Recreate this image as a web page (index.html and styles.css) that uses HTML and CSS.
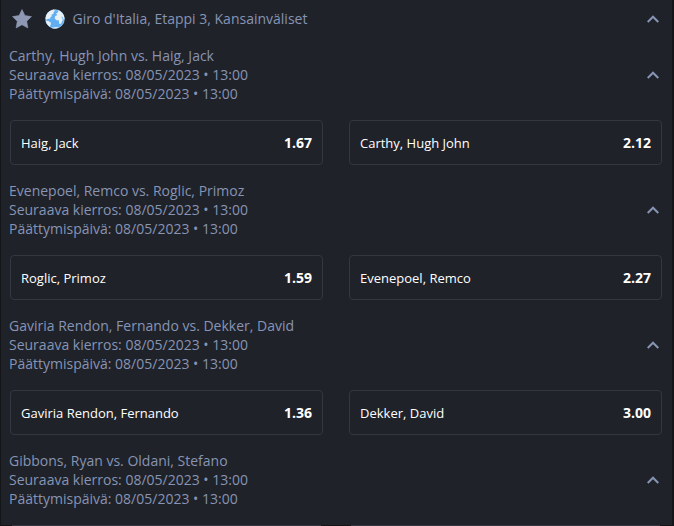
FILE: index.html
```html
<!DOCTYPE html>
<html lang="fi">
<head>
<meta charset="utf-8">
<title>Giro d'Italia</title>
<link rel="stylesheet" href="styles.css">
</head>
<body>
<svg class="defs" aria-hidden="true"><symbol id="up" viewBox="0 0 12 8"><path d="M.7 7 6 1.700 11.300 7"/></symbol></svg>
<main class="panel">
  <header class="head">
    <svg class="star" viewBox="0 0 20 20"><path d="M10 .5 12.900 6.600 19.500 7.600 14.700 12.200 15.900 19 10 15.700 4.100 19 5.300 12.200 .5 7.600 7.100 6.600Z"/></svg>
    <svg class="globe" viewBox="0 0 20 20"><circle cx="10" cy="10" r="9.5" fill="#62aef2"/><path fill="#e8f1f6" d="M6.500 1.200 8.800.6 9.800 2 8.600 3.300 8.400 5 6.600 5.500 6.700 7.300 5.200 8.500 5.300 9.800 3.500 9.700 1.200 10.500 .5 9C1 4.800 3.500 2.300 6.500 1.200ZM.6 11.800 3.300 12 6 13.700 5.700 15.700 4.600 17.800C2.500 16 1 14 .6 11.800ZM11 4.500 13 3.200 13.300 1.200C16.800 2.500 19.300 5.700 19.500 9.500L18.500 10.500 17.400 7.700 16.300 7.700 17.800 10.500 17.100 12.400 16 14.700 14.300 14.900 13.700 11.300 11.300 11.200 9.700 9.300 10.100 7.200 12.300 5.900ZM6.500 18.900 11 18 14 18.600C12 19.700 9 19.900 6.500 18.900Z"/><circle cx="10" cy="10" r="9.300" fill="none" stroke="#d5e9f8" stroke-width=".5"/></svg>
    <span class="title">Giro d'Italia, Etappi 3, Kansainväliset</span>
    <svg class="chevron"><use href="#up"/></svg>
  </header>
  <section class="match">
    <div class="info"><p>Carthy, Hugh John vs. Haig, Jack<br>Seuraava kierros: 08/05/2023 • 13:00<br>Päättymispäivä: 08/05/2023 • 13:00</p><svg class="chevron"><use href="#up"/></svg></div>
    <div class="odds"><div class="pick"><span>Haig, Jack</span><b>1.67</b></div><div class="pick"><span>Carthy, Hugh John</span><b>2.12</b></div></div>
  </section>
  <section class="match">
    <div class="info"><p>Evenepoel, Remco vs. Roglic, Primoz<br>Seuraava kierros: 08/05/2023 • 13:00<br>Päättymispäivä: 08/05/2023 • 13:00</p><svg class="chevron"><use href="#up"/></svg></div>
    <div class="odds"><div class="pick"><span>Roglic, Primoz</span><b>1.59</b></div><div class="pick"><span>Evenepoel, Remco</span><b>2.27</b></div></div>
  </section>
  <section class="match">
    <div class="info"><p>Gaviria Rendon, Fernando vs. Dekker, David<br>Seuraava kierros: 08/05/2023 • 13:00<br>Päättymispäivä: 08/05/2023 • 13:00</p><svg class="chevron"><use href="#up"/></svg></div>
    <div class="odds"><div class="pick"><span>Gaviria Rendon, Fernando</span><b>1.36</b></div><div class="pick"><span>Dekker, David</span><b>3.00</b></div></div>
  </section>
  <section class="match last">
    <div class="info"><p>Gibbons, Ryan vs. Oldani, Stefano<br>Seuraava kierros: 08/05/2023 • 13:00<br>Päättymispäivä: 08/05/2023 • 13:00</p><svg class="chevron"><use href="#up"/></svg></div>
    <div class="odds"><div class="edge"></div><div class="edge"></div></div>
  </section>
</main>
</body>
</html>
```
FILE: styles.css
```css
* { box-sizing: border-box; }
html { overflow: hidden; }
body {
  margin: 0;
  height: 526px;
  overflow: hidden;
  background: #141519;
  color: #8794b4;
  font: 14px/19px "Open Sans", sans-serif;
}
.defs { display: block; width: 0; height: 0; }
.panel { width: 671px; height: 525px; margin-left: 1px; padding: 0 9px 0 8px; background: #1f2229; }
.head { display: flex; align-items: center; height: 38px; padding-bottom: 1px; }
.star { width: 20px; height: 20px; margin-left: 3px; fill: #8e98b3; stroke: #8e98b3; stroke-width: 0.6; stroke-linejoin: round; }
.globe { width: 20px; height: 20px; margin-left: 13px; }
.title { margin-left: 7.5px; }
.chevron { width: 12px; height: 8px; margin: 0 4px 0 auto; fill: none; stroke: #8794b4; stroke-width: 2; }
.match { height: 135px; padding-top: 8px; }
.last { height: auto; }
.info { display: flex; align-items: center; height: 57px; }
.info p { margin: 0; }
.odds { display: grid; grid-template-columns: 313px 313px; gap: 26px; margin: 17px 0 0 1px; }
.pick {
  display: flex;
  align-items: center;
  justify-content: space-between;
  height: 45px;
  padding: 0 10px;
  border: 1px solid #343740;
  border-radius: 4px;
  color: #fff;
  font-size: 13px;
}
.pick span { padding-top: 2px; }
.pick b { font-size: 14px; font-weight: 700; }
.edge { height: 1px; margin: 0 2px; background: #343740; }
```
